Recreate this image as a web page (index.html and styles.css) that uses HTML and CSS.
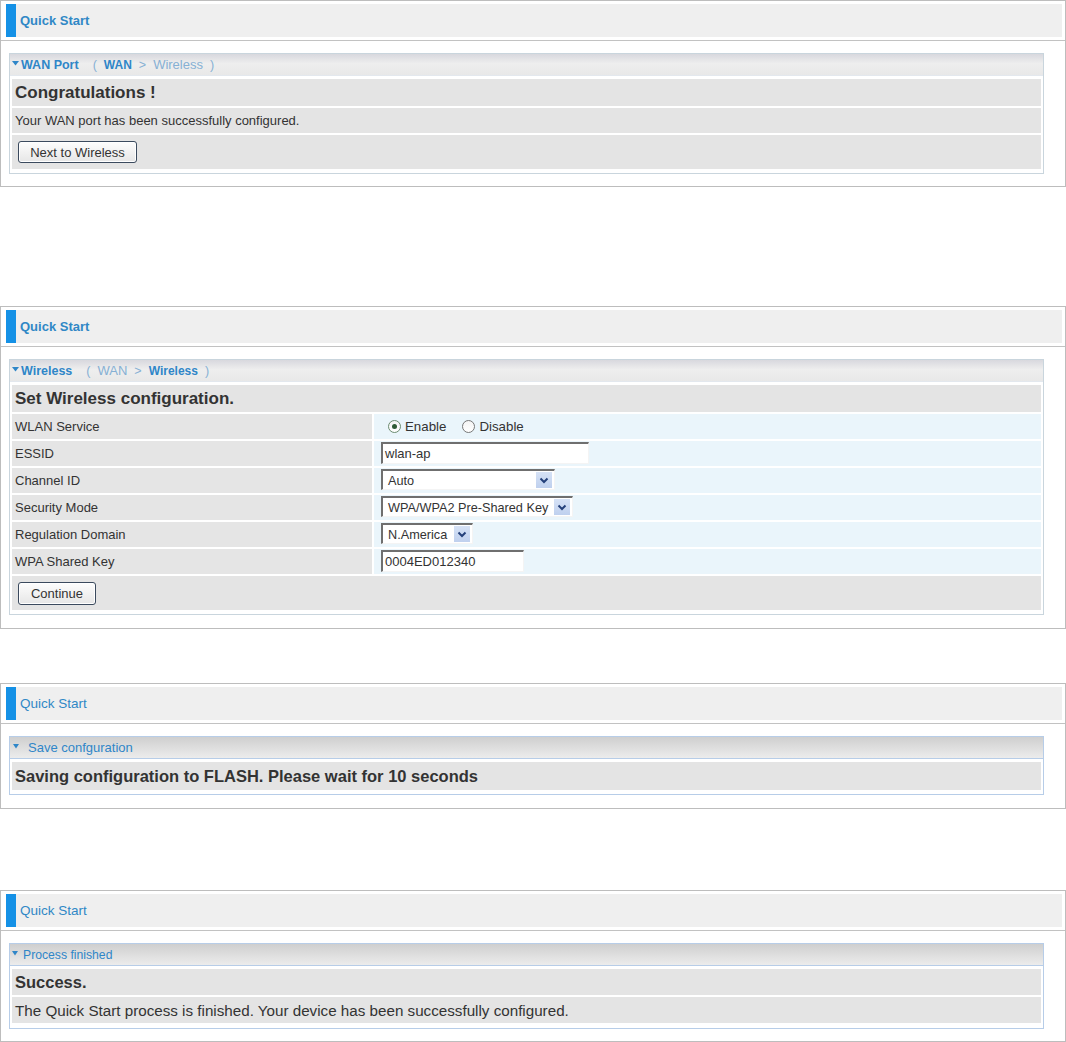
FILE: index.html
```html
<!DOCTYPE html>
<html>
<head>
<meta charset="utf-8">
<title>Quick Start</title>
<link rel="stylesheet" href="styles.css">
</head>
<body>
<div class="page">

  <section class="panel">
    <div class="qs-wrap"><div class="qs-bar qs-bold">Quick Start</div></div>
    <div class="panel-body">
      <div class="box">
        <div class="box-head">
          <svg class="tri" width="7" height="5" viewBox="0 0 7 5"><path d="M0 0H7L3.5 4.5Z" fill="#2f86c8"/></svg>
          <span class="bh-title">WAN Port</span>
          <span class="crumb">(</span><span class="crumb crumb-on">WAN</span><span class="crumb">&gt;</span><span class="crumb crumb-off">Wireless</span><span class="crumb">)</span>
        </div>
        <div class="rows">
          <div class="row row-title">Congratulations !</div>
          <div class="row row-text">Your WAN port has been successfully configured.</div>
          <div class="row row-btn"><span class="btn btn-next">Next to Wireless</span></div>
        </div>
      </div>
    </div>
  </section>

  <section class="panel gap-a">
    <div class="qs-wrap"><div class="qs-bar qs-bold">Quick Start</div></div>
    <div class="panel-body">
      <div class="box">
        <div class="box-head">
          <svg class="tri" width="7" height="5" viewBox="0 0 7 5"><path d="M0 0H7L3.5 4.5Z" fill="#2f86c8"/></svg>
          <span class="bh-title">Wireless</span>
          <span class="crumb">(</span><span class="crumb crumb-off">WAN</span><span class="crumb">&gt;</span><span class="crumb crumb-on">Wireless</span><span class="crumb">)</span>
        </div>
        <div class="rows">
          <div class="row row-title">Set Wireless configuration.</div>
          <div class="frow">
            <div class="flabel">WLAN Service</div>
            <div class="fvalue">
              <span class="radio radio-on"></span><span class="rlabel">Enable</span>
              <span class="radio radio-off"></span><span class="rlabel">Disable</span>
            </div>
          </div>
          <div class="frow">
            <div class="flabel">ESSID</div>
            <div class="fvalue"><span class="field field-essid">wlan-ap</span></div>
          </div>
          <div class="frow">
            <div class="flabel">Channel ID</div>
            <div class="fvalue"><span class="field sel sel-channel"><span class="sel-text">Auto</span><span class="sel-arrow"><svg width="10" height="7" viewBox="0 0 10 7"><path d="M1.5 1.5L5 5L8.5 1.5" fill="none" stroke="#24407a" stroke-width="2"/></svg></span></span></div>
          </div>
          <div class="frow">
            <div class="flabel">Security Mode</div>
            <div class="fvalue"><span class="field sel sel-security"><span class="sel-text">WPA/WPA2 Pre-Shared Key</span><span class="sel-arrow"><svg width="10" height="7" viewBox="0 0 10 7"><path d="M1.5 1.5L5 5L8.5 1.5" fill="none" stroke="#24407a" stroke-width="2"/></svg></span></span></div>
          </div>
          <div class="frow">
            <div class="flabel">Regulation Domain</div>
            <div class="fvalue"><span class="field sel sel-domain"><span class="sel-text">N.America</span><span class="sel-arrow"><svg width="10" height="7" viewBox="0 0 10 7"><path d="M1.5 1.5L5 5L8.5 1.5" fill="none" stroke="#24407a" stroke-width="2"/></svg></span></span></div>
          </div>
          <div class="frow">
            <div class="flabel">WPA Shared Key</div>
            <div class="fvalue"><span class="field field-key">0004ED012340</span></div>
          </div>
          <div class="row row-btn"><span class="btn btn-continue">Continue</span></div>
        </div>
      </div>
    </div>
  </section>

  <section class="panel gap-b">
    <div class="qs-wrap"><div class="qs-bar">Quick Start</div></div>
    <div class="panel-body">
      <div class="box box-blue">
        <div class="box-head box-head-b">
          <svg class="tri-b" width="6" height="5" viewBox="0 0 6 5"><path d="M0 0H6L3 4.5Z" fill="#2f86c8"/></svg>
          <span class="bh-title-b">Save confguration</span>
        </div>
        <div class="rows">
          <div class="row row-title-b row-save">Saving configuration to FLASH. Please wait for 10 seconds</div>
        </div>
      </div>
    </div>
  </section>

  <section class="panel gap-c">
    <div class="qs-wrap"><div class="qs-bar">Quick Start</div></div>
    <div class="panel-body">
      <div class="box box-blue">
        <div class="box-head box-head-b">
          <svg class="tri-c" width="6" height="5" viewBox="0 0 6 5"><path d="M0 0H6L3 4.5Z" fill="#2f86c8"/></svg>
          <span class="bh-title-c">Process finished</span>
        </div>
        <div class="rows rows-last">
          <div class="row row-title-b row-success">Success.</div>
          <div class="row row-text-b">The Quick Start process is finished. Your device has been successfully configured.</div>
        </div>
      </div>
    </div>
  </section>

</div>
</body>
</html>
```

FILE: styles.css
```css
html, body {
  margin: 0;
  padding: 0;
  background: #ffffff;
}

body {
  font-family: "Liberation Sans", Arial, sans-serif;
  color: #333333;
  font-size: 13px;
}

.page {
  display: flex;
  flex-direction: column;
  width: 1066px;
}

.panel {
  border: 1px solid #bdbdbd;
  box-sizing: border-box;
  width: 1066px;
}

.gap-a { margin-top: 119px; }
.gap-b { margin-top: 54px; }
.gap-c { margin-top: 81px; }

.qs-wrap {
  padding: 3px 3px 3px 5px;
  border-bottom: 1px solid #c2c2c2;
}

.qs-bar {
  height: 33px;
  background: #efefef;
  border-left: 10px solid #1591e6;
  padding-left: 4px;
  display: flex;
  align-items: center;
  color: #3088c6;
  font-size: 13.5px;
}

.qs-bold {
  font-weight: bold;
  font-size: 13px;
}

.panel-body {
  padding: 12px 21px 12px 8px;
}

.panel.gap-a .panel-body,
.panel.gap-b .panel-body {
  padding-bottom: 13px;
}

.box {
  border: 1px solid #c9d5dd;
}

.box-blue {
  border-color: #b7cde8;
}

.box-head {
  height: 21px;
  display: flex;
  align-items: center;
  padding-left: 2px;
  background: linear-gradient(#d8d8de, #eeeeee 45%, #e8e8e8);
  border-bottom: 1px solid #e3e8ee;
  font-size: 12px;
}

.box-head-b {
  background: linear-gradient(#cfcfcf, #ececec);
  border-bottom: 1px solid #b7cde8;
}

.tri {
  margin-right: 2px;
  margin-bottom: 2px;
}

.tri-b {
  margin-left: 1px;
  margin-right: 9px;
  margin-bottom: 2px;
}

.tri-c {
  margin-left: 0;
  margin-right: 5px;
  margin-bottom: 2px;
}

.bh-title {
  font-weight: bold;
  color: #2f86c8;
  margin-right: 14px;
  font-size: 12.5px;
}

.bh-title-b {
  color: #2f86c8;
  font-size: 13px;
}

.bh-title-c {
  color: #2f86c8;
  font-size: 12.2px;
}

.crumb {
  color: #86b0d4;
  margin-right: 7px;
  font-size: 12.5px;
}

.crumb-on {
  color: #2f86c8;
  font-weight: bold;
  font-size: 12px;
}

.crumb-off {
  color: #86b0d4;
  font-size: 13px;
}

.rows {
  padding: 3px 2px 4px 2px;
  display: flex;
  flex-direction: column;
  gap: 2px;
}

.rows-last {
  padding-bottom: 5px;
}

.row {
  background: #e4e4e4;
  display: flex;
  align-items: center;
  padding-left: 3px;
}

.row-title {
  height: 27px;
  font-size: 17px;
  font-weight: bold;
  color: #333333;
}

.row-text {
  height: 25px;
  font-size: 13px;
}

.row-btn {
  height: 34px;
  padding-left: 6px;
}

.row-title-b {
  font-size: 16.5px;
  font-weight: bold;
  color: #333333;
}

.row-save {
  height: 28px;
}

.row-success {
  height: 26px;
}

.row-text-b {
  height: 26px;
  font-size: 15.2px;
}

.btn {
  display: inline-flex;
  align-items: center;
  justify-content: center;
  box-sizing: border-box;
  height: 22px;
  border: 1px solid #3b4a5e;
  border-radius: 3px;
  background: linear-gradient(#fdfdfd, #e6e6e6);
  color: #333333;
  font-size: 13px;
  box-shadow: inset 0 0 0 1px #ffffff;
}

.btn-next {
  width: 119px;
}

.btn-continue {
  width: 78px;
  height: 23px;
}

.frow {
  display: flex;
  gap: 2px;
  height: 25px;
}

.flabel {
  width: 357px;
  background: #e5e5e5;
  display: flex;
  align-items: center;
  padding-left: 3px;
  font-size: 13px;
}

.fvalue {
  flex: 1;
  background: #eaf5fb;
  display: flex;
  align-items: flex-start;
  padding-left: 7px;
  padding-top: 1px;
  font-size: 13px;
}

.radio {
  width: 13px;
  height: 13px;
  box-sizing: border-box;
  border-radius: 50%;
  border: 1px solid #777777;
  background: linear-gradient(#f4f4f4, #ffffff);
  margin-top: 5px;
  position: relative;
}

.radio-on {
  margin-left: 7px;
  border-color: #6c8c70;
}

.radio-on::after {
  content: "";
  position: absolute;
  left: 3px;
  top: 3px;
  width: 5px;
  height: 5px;
  border-radius: 50%;
  background: #2e5a34;
}

.radio-off {
  margin-left: 16px;
}

.rlabel {
  margin-left: 4px;
  line-height: 24px;
  font-size: 13.3px;
}

.field {
  box-sizing: border-box;
  height: 22px;
  background: #ffffff;
  border-top: 2px solid #6f6f6f;
  border-left: 2px solid #6f6f6f;
  border-right: 1px solid #f4f4f4;
  border-bottom: 1px solid #f4f4f4;
  display: flex;
  align-items: center;
  padding-left: 2px;
  font-size: 13px;
  color: #333333;
}

.field-essid { width: 208px; }
.field-key { width: 143px; }

.sel {
  height: 21px;
  padding-left: 5px;
  padding-right: 2px;
  justify-content: space-between;
}

.sel-text {
  white-space: nowrap;
  font-size: 12.7px;
  padding-top: 1px;
}

.sel-channel { width: 174px; }
.sel-security { width: 192px; }
.sel-domain { width: 92px; }

.sel-arrow {
  flex: none;
  width: 16px;
  height: 16px;
  background: linear-gradient(#d6e2f6, #bfd0ee);
  display: flex;
  align-items: center;
  justify-content: center;
  margin-left: 4px;
}
```
